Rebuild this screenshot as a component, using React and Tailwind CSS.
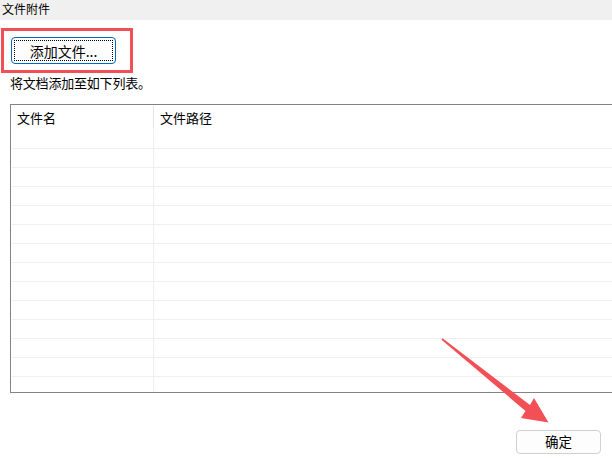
const rows = Array.from({ length: 14 });

function Arrow() {
  return (
    <svg
      className="absolute left-0 top-0 pointer-events-none"
      width="612"
      height="460"
      viewBox="0 0 612 460"
    >
      <polygon
        points="441.5,339.7 525.5,411 521,418 548.5,422.5 534,398 530,405 442.5,338.3"
        fill="#f24f56"
      />
    </svg>
  );
}

export default function App() {
  return (
    <div
      className="relative w-[612px] h-[460px] bg-white overflow-hidden text-black"
      style={{ fontFamily: '"Noto Sans CJK SC", "Noto Sans", sans-serif' }}
    >
      <div className="h-[20px] bg-[#f0f0f0] pl-[2px] text-[12px] leading-[18px]">文件附件</div>

      <div className="mt-[8px] ml-[1px] w-[132px] h-[45px] border-[3px] border-[#f24f56] pl-[7px] pt-[6px]">
        <button className="w-[105px] h-[27px] rounded-[4px] border border-[#0067c0] bg-[#fdfdfd] p-[2px]">
          <span className="flex items-center justify-center h-full border border-dotted border-black text-[14px] leading-none">
            添加文件...
          </span>
        </button>
      </div>

      <div className="ml-[10px] mt-[2px] text-[13px] leading-[16px] tracking-[-0.2px]">将文档添加至如下列表。</div>

      <div className="ml-[10px] mt-[13px] w-[610px] h-[289px] border-l border-t border-b border-[#82828a] flex flex-col">
        <div className="flex h-[25px] shrink-0 text-[13px]">
          <div className="w-[143px] pl-[6px] pt-[4px] leading-[16px] border-r border-[#e5e5e5] my-[1px]">文件名</div>
          <div className="pl-[6px] pt-[5px] leading-[16px]">文件路径</div>
        </div>
        <div className="flex-1 overflow-hidden pl-[1px]">
          {rows.map((_, i) => (
            <div key={i} className="flex h-[19px] border-b border-[#efefef]">
              <div className="w-[142px] border-r border-[#efefef]" />
              <div className="flex-1" />
            </div>
          ))}
        </div>
      </div>

      <div className="flex justify-end pr-[11px] mt-[37px]">
        <button className="w-[85px] h-[24px] rounded-[4px] border border-[#d0d0d0] bg-[#fdfdfd] text-[13.5px] leading-none">
          确定
        </button>
      </div>

      <Arrow />
    </div>
  );
}
